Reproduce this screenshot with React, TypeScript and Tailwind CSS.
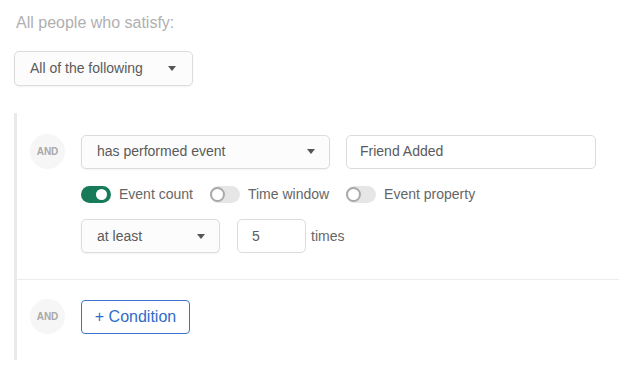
const Caret = () => (
    <svg width="8" height="5" viewBox="0 0 8 5" className="shrink-0">
        <path d="M0 0 L8 0 L4 5 Z" fill="#555" />
    </svg>
)

const Select = ({ label, className }: { label: string; className: string }) => (
    <div className={`flex items-center justify-between h-[34px] pl-[15px] pr-[14px] rounded-[5px] border border-[#dcdcdc] bg-[#fcfcfc] shadow-[0_1px_2px_rgba(0,0,0,0.05)] text-[14px] text-[#5a5a5a] ${className}`}>
        <span>{label}</span>
        <Caret />
    </div>
)

const Toggle = ({ on, label }: { on?: boolean; label: string }) => (
    <div className="flex items-center gap-[8px]">
        {on ? (
            <div className="relative w-[30px] h-[17px] rounded-full bg-[#177a58]">
                <div className="absolute right-[4px] top-[3px] w-[11px] h-[11px] rounded-full bg-white" />
            </div>
        ) : (
            <div className="relative w-[30px] h-[17px] rounded-full bg-[#e6e6e6]">
                <div className="absolute left-0 top-[1px] w-[15px] h-[15px] rounded-full bg-white border-2 border-[#a9a9a9]" />
            </div>
        )}
        <span className="text-[14px] text-[#666]">{label}</span>
    </div>
)

const AndBadge = () => (
    <div className="w-[35px] h-[35px] rounded-full bg-[#f6f6f6] flex items-center justify-center text-[10px] font-bold text-[#a8a8a8] shrink-0">
        AND
    </div>
)

export default function App() {
    return (
        <div className="w-[619px] h-[380px] bg-white overflow-hidden" style={{ fontFamily: '"Liberation Sans", Arial, sans-serif' }}>
            <div className="pl-[16px] pt-[13px] text-[16px] leading-[20px] text-[#b0b0b0]">All people who satisfy:</div>

            <div className="pl-[14px] pt-[18px]">
                <Select label="All of the following" className="w-[179px] h-[35px] pr-[16px]" />
            </div>

            <div className="ml-[14px] mt-[27px] border-l-[3px] border-[#e9e9e9]">
                {/* first condition */}
                <div className="pt-[21px] pb-[26px] border-b border-[#ececec]">
                    <div className="flex items-center pl-[13px] gap-[16px]">
                        <AndBadge />
                        <Select label="has performed event" className="w-[249px]" />
                        <div className="w-[250px] h-[34px] flex items-center pl-[13px] rounded-[5px] border border-[#dcdcdc] bg-white text-[14px] text-[#5a5a5a]">
                            Friend Added
                        </div>
                    </div>

                    <div className="pl-[64px] mt-[17px] flex items-center gap-[17px] h-[17px]">
                        <Toggle on label="Event count" />
                        <Toggle label="Time window" />
                        <Toggle label="Event property" />
                    </div>

                    <div className="pl-[64px] mt-[16px] flex items-center">
                        <Select label="at least" className="w-[139px]" />
                        <div className="ml-[17px] w-[69px] h-[34px] flex items-center pl-[14px] rounded-[5px] border border-[#dcdcdc] bg-white text-[14px] text-[#5a5a5a]">
                            5
                        </div>
                        <span className="ml-[5px] text-[14px] text-[#666]">times</span>
                    </div>
                </div>

                {/* add condition */}
                <div className="pt-[19px] pb-[26px] pl-[13px] flex items-center gap-[16px]">
                    <AndBadge />
                    <button className="w-[109px] h-[34px] rounded-[4px] border border-[#3b74cc] text-[16px] text-[#2f6cc9] bg-white">
                        + Condition
                    </button>
                </div>
            </div>
        </div>
    )
}
